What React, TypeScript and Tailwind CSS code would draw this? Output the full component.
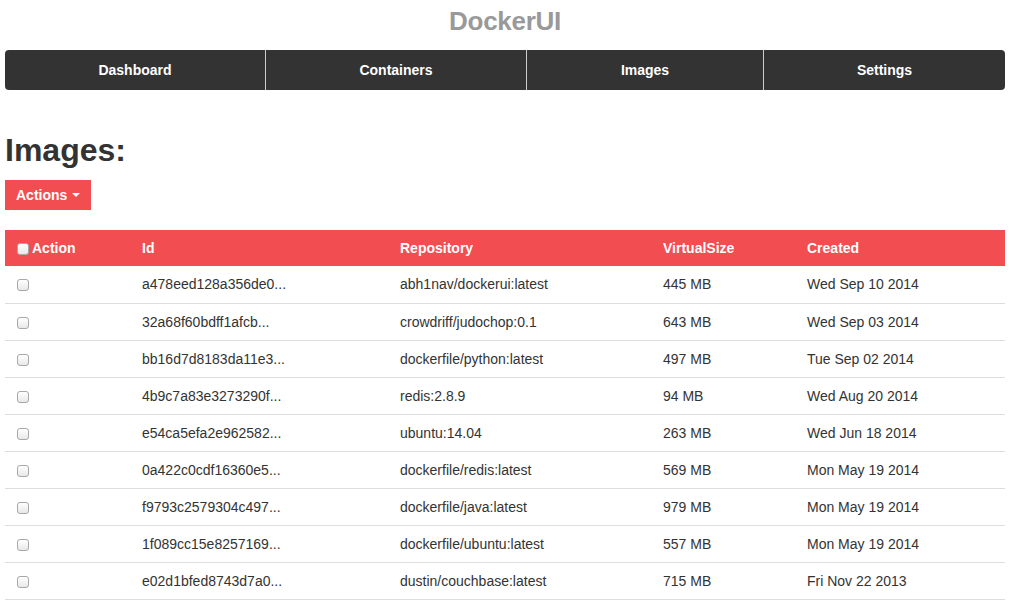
import { useState } from "react";

interface IImage {
  id: string;
  repo: string;
  size: string;
  created: string;
}

const images: IImage[] = [
  { id: "a478eed128a356de0...", repo: "abh1nav/dockerui:latest", size: "445 MB", created: "Wed Sep 10 2014" },
  { id: "32a68f60bdff1afcb...", repo: "crowdriff/judochop:0.1", size: "643 MB", created: "Wed Sep 03 2014" },
  { id: "bb16d7d8183da11e3...", repo: "dockerfile/python:latest", size: "497 MB", created: "Tue Sep 02 2014" },
  { id: "4b9c7a83e3273290f...", repo: "redis:2.8.9", size: "94 MB", created: "Wed Aug 20 2014" },
  { id: "e54ca5efa2e962582...", repo: "ubuntu:14.04", size: "263 MB", created: "Wed Jun 18 2014" },
  { id: "0a422c0cdf16360e5...", repo: "dockerfile/redis:latest", size: "569 MB", created: "Mon May 19 2014" },
  { id: "f9793c2579304c497...", repo: "dockerfile/java:latest", size: "979 MB", created: "Mon May 19 2014" },
  { id: "1f089cc15e8257169...", repo: "dockerfile/ubuntu:latest", size: "557 MB", created: "Mon May 19 2014" },
  { id: "e02d1bfed8743d7a0...", repo: "dustin/couchbase:latest", size: "715 MB", created: "Fri Nov 22 2013" },
];

const navItems = [
  { label: "Dashboard", w: "w-[260px]" },
  { label: "Containers", w: "w-[261px]" },
  { label: "Images", w: "w-[237px]" },
  { label: "Settings", w: "flex-1" },
];

const boxClass =
  "block h-[12px] w-[12px] appearance-none rounded-[3px] border border-[#a8a8a8] bg-gradient-to-b from-white to-[#e8e8e8] checked:bg-[#4a90e2]";

function App() {
  const [checked, setChecked] = useState<Record<number, boolean>>({});

  return (
    <div className="min-h-[612px] bg-white pl-[5px] pr-[9px] text-[14px] text-[#333] font-['Liberation_Sans',Arial,sans-serif]">
      <div className="flex h-[42px] items-center justify-center">
        <span className="text-[26px] font-bold text-[#999] tracking-[-0.3px]">DockerUI</span>
      </div>

      <nav className="mt-[8px] flex h-[40px] rounded-[4px] bg-[#333] text-white">
        {navItems.map((item, i) => (
          <div
            key={item.label}
            className={`${item.w} flex items-center justify-center font-bold ${
              i > 0 ? "border-l border-[#ccc]" : ""
            }`}
          >
            {item.label}
          </div>
        ))}
      </nav>

      <h1 className="mt-[42px] text-[32px] font-bold leading-[36px] text-[#333]">Images:</h1>

      <button className="mt-[12px] flex h-[30px] items-center gap-[5px] bg-[#f24d50] px-[11px] font-bold text-white">
        Actions
        <span className="h-0 w-0 border-x-[4px] border-t-[4px] border-x-transparent border-t-white" />
      </button>

      <table className="mt-[20px] w-full border-collapse">
        <thead>
          <tr className="h-[36px] bg-[#f24d50] text-left font-bold text-white">
            <th className="w-[129px] pl-[12px]">
              <span className="flex items-center gap-[3px]">
                <input type="checkbox" className={`${boxClass} mt-[1px]`} />
                Action
              </span>
            </th>
            <th className="w-[258px] pl-[8px]">Id</th>
            <th className="w-[263px] pl-[8px]">Repository</th>
            <th className="w-[144px] pl-[8px]">VirtualSize</th>
            <th className="pl-[8px]">Created</th>
          </tr>
        </thead>
        <tbody>
          {images.map((img, i) => (
            <tr key={img.id} className="h-[37px] border-b border-[#ddd]">
              <td className="pl-[12px] align-middle">
                <input
                  type="checkbox"
                  className={`${boxClass} mt-[2px]`}
                  checked={!!checked[i]}
                  onChange={() => setChecked({ ...checked, [i]: !checked[i] })}
                />
              </td>
              <td className="pl-[8px] pt-[1px]">{img.id}</td>
              <td className="pl-[8px] pt-[1px]">{img.repo}</td>
              <td className="pl-[8px] pt-[1px]">{img.size}</td>
              <td className="pl-[8px] pt-[1px]">{img.created}</td>
            </tr>
          ))}
        </tbody>
      </table>
    </div>
  );
}

export default App;
